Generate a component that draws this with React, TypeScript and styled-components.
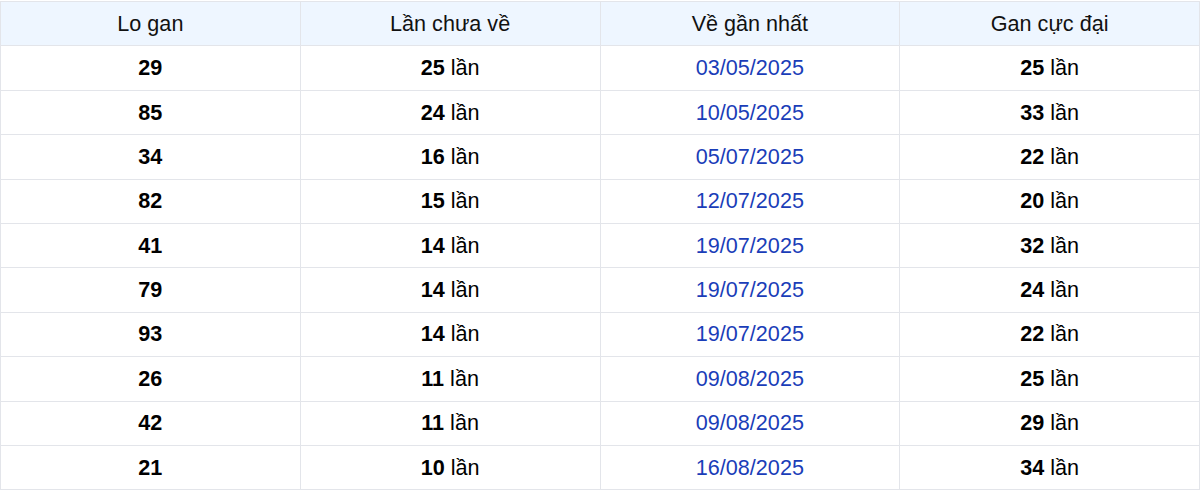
import React from "react";
import styled, { createGlobalStyle } from "styled-components";

const Global = createGlobalStyle`
  html, body { margin: 0; padding: 0; background: #ffffff; }
  body { font-family: "Liberation Sans", Arial, sans-serif; }
`;

const Wrap = styled.div`
  padding-top: 1px;
`;

const Table = styled.table`
  width: 1200px;
  border-collapse: collapse;
  table-layout: fixed;
  font-family: "Liberation Sans", Arial, sans-serif;
  font-size: 21.6px;
  line-height: 1.2;
  color: #000;
`;

const HeadCell = styled.th`
  height: 43.4px;
  padding: 0;
  background: #eef6ff;
  border: 1px solid #e3e5ea;
  font-weight: 400;
  text-align: center;
  vertical-align: middle;
  color: #111;
`;

const Cell = styled.td<{ $date?: boolean }>`
  height: 43.4px;
  padding: 0;
  border: 1px solid #e3e5ea;
  text-align: center;
  vertical-align: middle;
  color: ${(p) => (p.$date ? "#1a3db8" : "#000")};
`;

const Num = styled.b`
  font-weight: 700;
`;

const rows: [string, string, string, string][] = [
  ["29", "25", "03/05/2025", "25"],
  ["85", "24", "10/05/2025", "33"],
  ["34", "16", "05/07/2025", "22"],
  ["82", "15", "12/07/2025", "20"],
  ["41", "14", "19/07/2025", "32"],
  ["79", "14", "19/07/2025", "24"],
  ["93", "14", "19/07/2025", "22"],
  ["26", "11", "09/08/2025", "25"],
  ["42", "11", "09/08/2025", "29"],
  ["21", "10", "16/08/2025", "34"],
];

export default function App() {
  return (
    <Wrap>
      <Global />
      <Table>
        <thead>
          <tr>
            <HeadCell>Lo gan</HeadCell>
            <HeadCell>Lần chưa về</HeadCell>
            <HeadCell>Về gần nhất</HeadCell>
            <HeadCell>Gan cực đại</HeadCell>
          </tr>
        </thead>
        <tbody>
          {rows.map((r, i) => (
            <tr key={i}>
              <Cell>
                <Num>{r[0]}</Num>
              </Cell>
              <Cell>
                <Num>{r[1]}</Num> lần
              </Cell>
              <Cell $date>{r[2]}</Cell>
              <Cell>
                <Num>{r[3]}</Num> lần
              </Cell>
            </tr>
          ))}
        </tbody>
      </Table>
    </Wrap>
  );
}
